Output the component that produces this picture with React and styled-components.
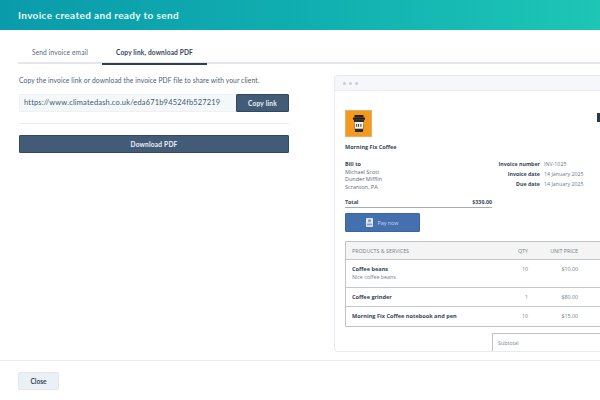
import React from "react";
import styled, { createGlobalStyle } from "styled-components";

const Global = createGlobalStyle`
  html, body { margin: 0; padding: 0; background: #fff; }
  body { font-family: "Open Sans", "Noto Sans", "Liberation Sans", sans-serif; color: #33475b; }
  * { box-sizing: border-box; }
`;
const Page = styled.div`
  width: 600px; height: 400px; display: flex; flex-direction: column; overflow: hidden; background: #fff;
`;
const Header = styled.header`
  height: 30px; flex: none; display: flex; align-items: center; padding-left: 18px;
  background: linear-gradient(90deg, #0a9bab 0%, #10aeb0 50%, #1ec6b6 100%);
`;
const Title = styled.h1`
  margin: 0; font-family: Lato, sans-serif; font-size: 10px; font-weight: 700; letter-spacing: 0.36px; color: #e8fbfa;
`;
const Body = styled.main`
  flex: 1; min-height: 0; display: flex; flex-direction: column; border-bottom: 1px solid #e7ebef;
`;
const Tabs = styled.nav`
  height: 34px; margin-left: 18px; display: flex; padding-top: 14px; border-bottom: 2px solid #e3e7eb;
`;
const Tab = styled.div`
  height: 21px; padding-top: 4px; text-align: center; font-family: Lato, sans-serif; font-size: 6.6px; letter-spacing: 0.14px;
  width: ${p => p.$w}px; font-weight: ${p => (p.$active ? 700 : 400)}; color: ${p => (p.$active ? "#33475b" : "#55687a")};
  border-bottom: 2px solid ${p => (p.$active ? "#2f3e50" : "transparent")};
`;
const Columns = styled.div`flex: 1; min-height: 0; display: flex; gap: 45px; padding-left: 19px;`;
const Left = styled.section`width: 270px; flex: none; display: flex; flex-direction: column;`;
const Help = styled.p`
  margin: 12px 0 0; font-family: Lato, sans-serif; font-size: 6.7px; line-height: 9px; color: #4d6072; letter-spacing: 0.1px; white-space: nowrap;
`;
const LinkRow = styled.div`display: flex; height: 18px; margin-top: 9px;`;
const LinkBox = styled.div`
  flex: 1; background: #f5f8fa; border: 1px solid #eef1f4; border-right: 0; border-radius: 2px 0 0 2px; padding-left: 4px;
  font-family: Lato, sans-serif; font-size: 7.5px; line-height: 16px; color: #465a6d; letter-spacing: 0.16px; white-space: nowrap; overflow: hidden;
`;
const DarkButton = styled.button`
  border: 1px solid #34475d; background: #425b76; color: #eef2f6; border-radius: 1px; padding: 0;
  font-family: Lato, sans-serif; font-size: 6.6px; font-weight: 700; letter-spacing: 0.2px;
  width: ${p => p.$w}; height: 18px; flex: none;
`;
const Rule = styled.hr`margin: 11px 0; border: 0; border-top: 1px solid #eaeef1;`;
const Preview = styled.aside`
  flex: 1; min-width: 0; margin: 11px 0 8px; border: 1px solid #e7ebef; border-right: 0; border-radius: 4px 0 0 4px; overflow: hidden;
`;
const Chrome = styled.div`
  height: 15px; background: #f5f8fa; border-bottom: 1px solid #e7ebef; display: flex; align-items: center; gap: 3px; padding-left: 8px;
`;
const Dot = styled.span`width: 3px; height: 3px; border-radius: 50%; background: #c5ced7;`;
const Invoice = styled.div`width: 330px; padding: 19px 0 0 10px;`;
const TopRow = styled.div`display: flex; justify-content: space-between; width: 255px;`;
const Logo = styled.div`
  width: 27px; height: 27px; background: #f39a1e; border: 1px solid #e5b06a; display: flex; align-items: center; justify-content: center;
`;
const EdgeMark = styled.span`width: 3px; height: 9px; margin-top: 3px; background: #2b3a4a;`;
const Company = styled.div`margin-top: 6px; font-size: 5.5px; line-height: 8px; font-weight: 700; color: #33475b;`;
const Details = styled.div`display: flex; margin-top: 10px; height: 37px;`;
const BillTo = styled.div`width: 147px; font-size: 5.5px; line-height: 7.7px; color: #5a6b7b;`;
const Strong = styled.div`font-weight: 700; color: #33475b;`;
const Meta = styled.div`
  display: grid; grid-template-columns: 48px max-content; column-gap: 4px; align-content: start;
  font-size: 5.3px; line-height: 10px; color: #6a7a8a; margin-top: -2px;
`;
const MetaLabel = styled.div`display: flex; justify-content: flex-end; font-weight: 700; color: #33475b; white-space: nowrap;`;
const MetaValue = styled.div`white-space: nowrap;`;
const Total = styled.div`
  width: 147px; display: flex; justify-content: space-between; border-bottom: 1px solid #a7acb2; height: 10px;
  font-size: 5.3px; line-height: 8px; font-weight: 700; color: #33475b;
`;
const PayButton = styled.div`
  width: 75px; height: 19px; margin-top: 5px; background: #4470b0; border: 1px solid #3d649e; border-radius: 1px;
  display: flex; align-items: center; justify-content: center; gap: 4px; font-size: 5.4px; color: #c5d4e8;
`;
const Table = styled.div`width: 300px; margin-top: 9px; border: 1px solid #bfc3c7; border-radius: 1px;`;
const Row = styled.div`
  display: grid; grid-template-columns: 164px 12px 50px 1fr; padding-left: 6px; align-items: start; font-size: 5.3px; line-height: 8px; color: #707f8d;
  height: ${p => p.$h}px; padding-top: ${p => p.$pt}px;
  background: ${p => (p.$head ? "#f4f4f4" : "#fff")};
  border-bottom: ${p => (p.$last ? "0" : "1px solid #c5c8cb")};
`;
const Name = styled.div`font-weight: 700; font-size: 5.6px; color: #33475b; white-space: nowrap;`;
const Qty = styled.div`text-align: right; grid-column: 2;`;
const Price = styled.div`text-align: right; grid-column: 3;`;
const Totals = styled.div`
  width: 120px; height: 30px; margin: 6px 0 0 147px; border: 1px solid #bfc3c7; padding: 5px 0 0 5px; font-size: 5.3px; line-height: 8px; color: #707f8d;
`;
const Footer = styled.footer`flex: none; height: 39px; display: flex; align-items: flex-start; padding: 11px 0 0 18px;`;
const CloseButton = styled.button`
  width: 41px; height: 18px; background: #eaf0f6; border: 1px solid #e2e8ee; border-radius: 2px; color: #33475b; padding: 0;
  font-family: Lato, sans-serif; font-size: 6.6px; font-weight: 700;
`;

const Cup = () => (
  <svg width="14" height="19" viewBox="0 0 15 19">
    <rect x="2.5" y="0.5" width="10" height="2.5" rx="1" fill="#222" />
    <rect x="1" y="3" width="13" height="2.5" rx="0.6" fill="#1c1c1c" />
    <path d="M2 5.5h11l-1.3 13H3.3z" fill="#2a2a2a" />
    <path d="M2.5 8h10l-.7 7H3.2z" fill="#f6efe3" />
    <path d="M5 10v3M7 10v3M9.5 10v3" stroke="#333" strokeWidth="1" />
  </svg>
);
const PayIcon = () => (
  <svg width="7" height="9" viewBox="0 0 7 9">
    <rect width="7" height="9" rx="1" fill="#dfe8f3" />
    <rect x="2" y="1.2" width="3" height="3" rx="1.2" fill="#7f9fcb" />
    <rect x="1" y="5.6" width="5" height="1.8" fill="#7f9fcb" />
  </svg>
);

export default function App() {
  return (
    <Page>
      <Global />
      <Header><Title>Invoice created and ready to send</Title></Header>
      <Body>
        <Tabs>
          <Tab $w={84}>Send invoice email</Tab>
          <Tab $w={105} $active>Copy link, download PDF</Tab>
        </Tabs>
        <Columns>
          <Left>
            <Help>Copy the invoice link or download the invoice PDF file to share with your client.</Help>
            <LinkRow>
              <LinkBox>https://www.climatedash.co.uk/eda671b94524fb527219</LinkBox>
              <DarkButton $w="53px">Copy link</DarkButton>
            </LinkRow>
            <Rule />
            <DarkButton $w="100%">Download PDF</DarkButton>
          </Left>
          <Preview>
            <Chrome><Dot /><Dot /><Dot /></Chrome>
            <Invoice>
              <TopRow>
                <Logo><Cup /></Logo>
                <EdgeMark />
              </TopRow>
              <Company>Morning Fix Coffee</Company>
              <Details>
                <BillTo>
                  <Strong>Bill to</Strong>
                  <div>Michael Scott</div>
                  <div>Dunder Mifflin</div>
                  <div>Scranton, PA</div>
                </BillTo>
                <Meta>
                  <MetaLabel>Invoice number</MetaLabel><MetaValue>INV-1025</MetaValue>
                  <MetaLabel>Invoice date</MetaLabel><MetaValue>14 January 2025</MetaValue>
                  <MetaLabel>Due date</MetaLabel><MetaValue>14 January 2025</MetaValue>
                </Meta>
              </Details>
              <Total><span>Total</span><span>$330.00</span></Total>
              <PayButton><PayIcon />Pay now</PayButton>
              <Table>
                <Row $head $h={18} $pt={5}><div>PRODUCTS &amp; SERVICES</div><Qty>QTY</Qty><Price>UNIT PRICE</Price></Row>
                <Row $h={28} $pt={5}><div><Name>Coffee beans</Name><div>Nice coffee beans</div></div><Qty>10</Qty><Price>$10.00</Price></Row>
                <Row $h={19} $pt={5}><Name>Coffee grinder</Name><Qty>1</Qty><Price>$80.00</Price></Row>
                <Row $h={19} $pt={5} $last><Name>Morning Fix Coffee notebook and pen</Name><Qty>10</Qty><Price>$15.00</Price></Row>
              </Table>
              <Totals>Subtotal</Totals>
            </Invoice>
          </Preview>
        </Columns>
      </Body>
      <Footer><CloseButton>Close</CloseButton></Footer>
    </Page>
  );
}
